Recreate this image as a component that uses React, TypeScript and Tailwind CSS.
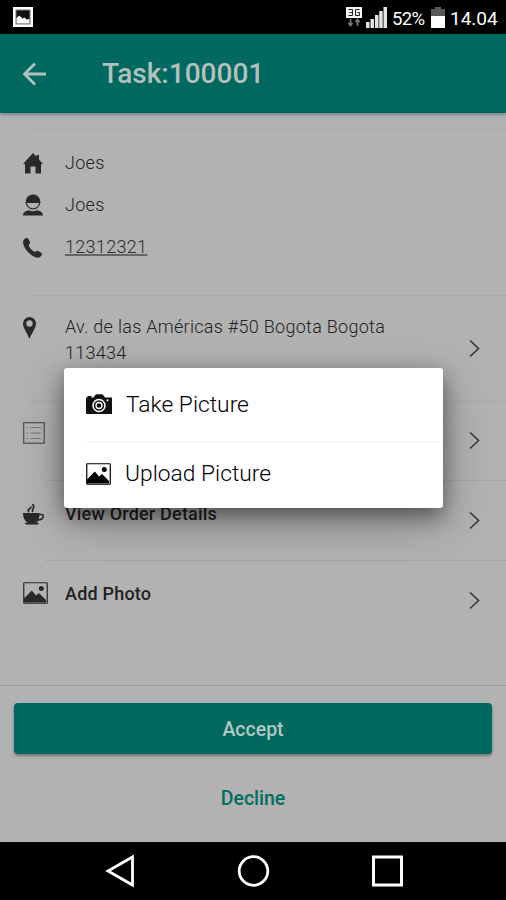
import React from "react";
import { clsx } from "clsx";

export default function App() {
  return (
    <div className="relative flex h-[900px] w-[506px] flex-col overflow-hidden bg-[#b2b2b2] font-[Roboto,sans-serif] text-[#222]">
      <StatusBar />
      <Header />

      <main className="flex h-[572px] flex-col">
        <div className="ml-7 mt-4 h-px bg-[#a8a8a8]" />

        <div className="flex h-[165px] flex-col pt-3">
          <Contact icon={<HomeIcon />}>Joes</Contact>
          <Contact icon={<PersonIcon />}>Joes</Contact>
          <Contact icon={<PhoneIcon />}>
            <span className="text-[#2c2c2c] underline decoration-[#666] decoration-2 underline-offset-1">
              12312321
            </span>
          </Contact>
        </div>

        <div className="ml-7 h-px bg-[#a8a8a8]" />

        <Row className="h-[105px]" icon={<PinIcon />}>
          Av. de las Américas #50 Bogota Bogota
          <br />
          113434
        </Row>
        <div className="ml-7 h-px bg-[#a8a8a8]" />
        <Row className="h-[78px]" icon={<ListIcon />} bold>
          View Task
        </Row>
        <Row className="h-20" icon={<CoffeeIcon />} border bold>
          View Order Details
        </Row>
        <Row className="h-20" icon={<ImageIcon />} border bold>
          Add Photo
        </Row>
      </main>

      <Footer />
      <NavigationBar />
      <PictureDialog />
    </div>
  );
}

function StatusBar() {
  return (
    <div className="flex h-[34px] shrink-0 items-center bg-black pl-[13px] pr-2 text-white">
      <svg width="20" height="20" viewBox="0 0 20 20">
        <rect width="20" height="20" fill="#fff" />
        <rect x="3" y="3" width="14" height="14" fill="#111" stroke="#777" />
        <path d="M3.500 16.500V11l3-2.500 3 3 2-1 2 2 3-.5v4.500z" fill="#fff" />
      </svg>

      <div className="ml-auto flex items-center">
        <svg width="16" height="20" viewBox="0 0 16 20">
          <rect width="16" height="11" fill="#f4f4f4" />
          <path
            d="M2.500 2.500h4v6h-4M3.500 5.500h3M13.500 2.500h-4v6h4v-3h-2"
            fill="none"
            stroke="#222"
          />
          <path
            d="M4.500 12v6M2.500 16l2 2.500 2-2.500M11.500 19v-6M9.500 15l2-2.500 2 2.500"
            fill="none"
            stroke="#777"
            strokeWidth="1.800"
          />
        </svg>
        <svg className="ml-1" width="21" height="21" viewBox="0 0 21 21">
          <path
            d="M0 15h3.500v6H0zM4.500 12H8v9H4.500zM9 8h3.500v13H9zM13.200 4h3.500v17h-3.500zM17.500 0H21v21h-3.500z"
            fill="#e4e4e4"
          />
        </svg>
        <span className="ml-[5px] w-[34px] whitespace-nowrap pt-[3px] text-[18.500px] leading-6 tracking-[-0.6px]">
          52%
        </span>
        <svg className="ml-[5px]" width="14" height="21" viewBox="0 0 14 21">
          <path d="M4 0h6v2h4v7H0V2h4z" fill="#5a5a5a" />
          <path d="M0 9h14v12H0z" fill="#fff" />
        </svg>
        <span className="ml-[5px] w-12 whitespace-nowrap pt-[3px] text-[19px] leading-6">
          14.04
        </span>
      </div>
    </div>
  );
}

function Header() {
  return (
    <header className="flex h-[79px] shrink-0 items-center bg-[#00695f] pl-[22px] text-[#b2c0be] shadow-[0_1px_4px_rgba(0,0,0,0.4)]">
      <svg
        width="25"
        height="24"
        viewBox="0 0 25 24"
        fill="none"
        stroke="currentColor"
        strokeWidth="2.800"
      >
        <path d="M13 1.500 2.500 12 13 22.500M2.500 12H24" />
      </svg>
      <h1 className="ml-[55px] text-[28px] font-medium leading-8">
        Task:100001
      </h1>
    </header>
  );
}

interface ContactProps {
  icon: React.ReactNode;
}

function Contact(props: React.PropsWithChildren<ContactProps>) {
  return (
    <div className="flex h-[42px] items-center pl-[23px]">
      <div className="w-[42px]">{props.icon}</div>
      <p className="text-[18px] font-light leading-5 tracking-[0.3px]">
        {props.children}
      </p>
    </div>
  );
}

interface RowProps {
  className: string;
  icon: React.ReactNode;
  border?: boolean;
  bold?: boolean;
}

function Row(props: React.PropsWithChildren<RowProps>) {
  return (
    <div className={clsx("flex pl-[23px]", props.className)}>
      <div className="flex h-[63px] w-[42px] shrink-0 items-center">
        {props.icon}
      </div>
      <div
        className={clsx(
          "-ml-5 flex flex-1 items-center pl-5 pr-[25px]",
          props.border && "border-t border-[#a6a6a6]",
        )}
      >
        <div
          className={clsx(
            "flex-1 self-start whitespace-nowrap text-[18px] leading-[26px]",
            props.bold
              ? "pt-5 font-medium tracking-[0.2px]"
              : "pt-[18px] font-light tracking-[0.28px]",
          )}
        >
          {props.children}
        </div>
        <svg
          width="12"
          height="18"
          viewBox="0 0 12 18"
          fill="none"
          stroke="#3c3c3c"
          strokeWidth="1.700"
        >
          <path d="m1 .5 8.500 8-8.500 8" />
        </svg>
      </div>
    </div>
  );
}

function Footer() {
  return (
    <footer className="flex h-[157px] flex-col items-center border-t border-[#999] px-[14px] pt-[17px]">
      <button className="h-[51px] w-full shrink-0 rounded bg-[#00695f] pt-0.5 text-[19.500px] font-medium text-[#b2c8c4] shadow-[0_2px_3px_rgba(0,0,0,0.35)]">
        Accept
      </button>
      <button className="mt-[31px] text-[19.500px] font-medium leading-7 text-[#006f5f]">
        Decline
      </button>
    </footer>
  );
}

function NavigationBar() {
  return (
    <nav className="flex h-[58px] items-center justify-center gap-[101px] bg-black">
      <svg width="33" height="34" viewBox="0 0 33 34">
        <path
          d="M5 17 29.500 3v28z"
          fill="none"
          stroke="#fff"
          strokeWidth="2.800"
        />
      </svg>
      <svg width="33" height="34" viewBox="0 0 33 34">
        <circle
          cx="16.500"
          cy="17"
          r="14.300"
          fill="none"
          stroke="#fff"
          strokeWidth="2.800"
        />
      </svg>
      <svg width="33" height="34" viewBox="0 0 33 34">
        <path
          d="M2.500 3h28v28h-28z"
          fill="none"
          stroke="#fff"
          strokeWidth="3"
        />
      </svg>
    </nav>
  );
}

function PictureDialog() {
  return (
    <div
      role="dialog"
      className="absolute left-16 top-[368px] flex h-[140px] w-[379px] flex-col rounded-[3px] bg-white pl-[22px] text-[22.800px] text-black shadow-[0_14px_48px_rgba(0,0,0,0.28),0_8px_20px_rgba(0,0,0,0.4)]"
    >
      <button className="flex h-[75px] items-center gap-[14px] border-b-2 border-[#f8f8f8]">
        <CameraIcon />
        <span className="pt-0.5 font-light">Take Picture</span>
      </button>
      <button className="flex h-[65px] items-center gap-[14px] pb-1">
        <ImageIcon className="text-black" />
        <span className="pt-0.5 font-light">Upload Picture</span>
      </button>
    </div>
  );
}

function HomeIcon() {
  return (
    <svg width="20" height="21" viewBox="0 0 20 21" fill="#292929">
      <path d="M10 0 13.500 3.700V2H16v4.500l4 4.500h-2v9.500h-5.500v-7h-5v7H2V11H0z" />
    </svg>
  );
}

function PersonIcon() {
  return (
    <svg width="20" height="22" viewBox="0 0 20 22">
      <circle cx="10" cy="8" r="6.800" fill="none" stroke="#333" strokeWidth="1.200" />
      <path d="M2.700 9a7.300 8.300 0 0 1 14.600 0z" fill="#292929" />
      <path d="M0 21.500c.2-3.500 2.500-4.300 6-5.200q4 2 8 0c3.500.9 5.800 1.700 6 5.200z" fill="#292929" />
    </svg>
  );
}

function PhoneIcon() {
  return (
    <svg className="mt-px" width="19" height="20" viewBox="0 0 19 20" fill="#292929">
      <path d="M1.500 1C3-.3 4.800-.2 5.700 1.400L7 4.300c.5 1.300-1.200 2-1.200 3.100.8 2.700 3.300 5.200 6 6.400 1.100.2 1.800-1.500 3-1l3 1.800c1.300.8 1.500 2 .5 3.200-1.500 2-4 2.300-6.300 1.200C6.500 16.700 2.200 11.900.4 6.500-.2 4.300-.2 2.600 1.500 1z" />
    </svg>
  );
}

function PinIcon() {
  return (
    <svg width="13" height="22" viewBox="0 0 13 22">
      <path
        d="M6.500 0A6.500 6.500 0 0 0 0 6.500C0 11 4 15.500 6.500 22 9 15.500 13 11 13 6.500A6.500 6.500 0 0 0 6.500 0zm0 3.300a3.200 3.200 0 1 1 0 6.400 3.200 3.200 0 0 1 0-6.400z"
        fill="#292929"
      />
    </svg>
  );
}

function ListIcon() {
  return (
    <svg className="-mt-px" width="22" height="22" viewBox="0 0 22 22" fill="none">
      <rect x=".7" y=".7" width="20.500" height="20.500" stroke="#555" strokeWidth="1.300" />
      <path
        d="M3.500 5.500h2M3.500 11h2M3.500 16.500h2M7.500 5.500H18M7.500 11H18M7.500 16.500H18"
        stroke="#777"
        strokeWidth="1.200"
      />
    </svg>
  );
}

function CoffeeIcon() {
  return (
    <svg className="mt-[5px]" width="22" height="21" viewBox="0 0 22 21">
      <path
        d="M0 9h16.500v1c3-.8 5 .3 4.500 2.700-.5 2.600-3 4.200-5.800 4-.8 1-1.500 1.500-2.500 2.100h3.300L15 20.500H3L1.500 18.800H5C1.500 17 0 13 0 9zm16.300 2.500c0 1.500-.2 2.500-.7 3.700 2-.1 3.500-1.200 3.900-2.600.3-1.300-1.300-1.700-3.200-1.100z"
        fill="#292929"
      />
      <path
        d="M6 8C3 5.500 8.800 4.500 7.800 2.500M10 8C7.500 5.500 13.300 4 9.500 0"
        fill="none"
        stroke="#292929"
        strokeWidth="1.700"
      />
    </svg>
  );
}

function ImageIcon(props: { className?: string }) {
  return (
    <svg
      className={clsx("shrink-0", props.className || "mt-[3px] text-[#292929]")}
      width="25"
      height="22"
      viewBox="0 0 25 22"
    >
      <rect
        x=".75"
        y=".75"
        width="23.500"
        height="20.500"
        rx=".5"
        fill="none"
        stroke="currentColor"
        strokeWidth="1.200"
      />
      <path
        d="M1 20.500v-4L8.800 8.500l4.200 5 3-2.500 7 7v2.500z"
        fill="currentColor"
      />
      <circle cx="18.300" cy="6.500" r="2.500" fill="currentColor" />
    </svg>
  );
}

function CameraIcon() {
  return (
    <svg className="shrink-0" width="26" height="21" viewBox="0 0 26 21">
      <path
        d="M0 3.500h1.500V2h4v1.500h2L9.500.7Q10 .2 11 .2h4.500q1 0 1.500.5l2 2.800h7v16.500H0z"
        fill="#111"
      />
      <circle cx="13" cy="11.500" r="6" fill="none" stroke="#fff" strokeWidth="1.500" />
      <circle cx="13" cy="11.500" r="3" fill="none" stroke="#fff" strokeWidth="1.300" />
      <circle cx="21.500" cy="6.300" r="1" fill="#fff" />
    </svg>
  );
}
